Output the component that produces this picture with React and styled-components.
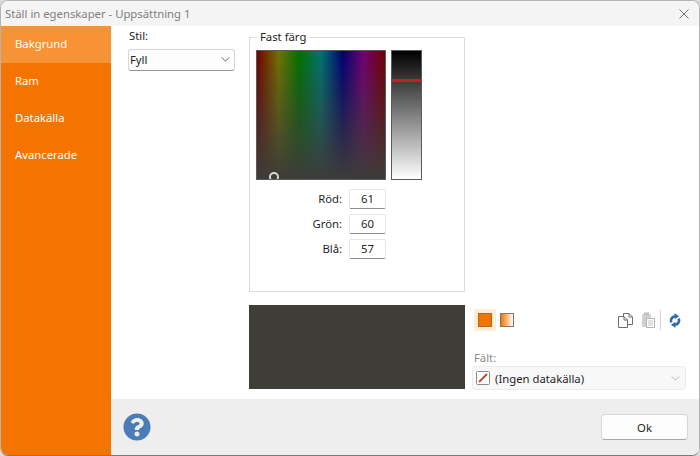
import React from 'react'
import styled, { createGlobalStyle } from 'styled-components'
import { FaQuestionCircle } from 'react-icons/fa'

const GlobalStyle = createGlobalStyle`
    html, body {
        margin: 0;
        padding: 0;
        background: #dcdcdc;
    }
    body {
        font-family: "Noto Sans", "Open Sans", sans-serif;
        font-size: 11.3px;
        color: #1f1f1f;
    }
`;

const tabs = ['Bakgrund', 'Ram', 'Datakälla', 'Avancerade'];
const channels = [['Röd:', 61], ['Grön:', 60], ['Blå:', 57]];

const Chevron = ({color}) => (
    <svg width="9" height="5" viewBox="0 0 10 6" fill="none" stroke={color} strokeWidth="1.1">
        <path d="M0.5 0.5 L5 5 L9.5 0.5"/>
    </svg>
);

const CopyIcon = () => (
    <svg width="15" height="15" viewBox="0 0 15 15" fill="#fff" stroke="#6e6e6e" strokeWidth="1">
        <path d="M5.5 3.5 V0.5 H11 L14.5 4 V11.5 H9.5"/>
        <path d="M0.5 3.5 H6 L9.5 7 V14.5 H0.5 Z"/>
        <path d="M6 3.5 V7 H9.5" fill="none"/>
        <path d="M11 0.5 V4 H14.5" fill="none"/>
    </svg>
);

const PasteIcon = () => (
    <svg width="13" height="16" viewBox="0 0 13 16">
        <rect x="0" y="2" width="9" height="13" rx="1" fill="#cfd2d0"/>
        <rect x="2" y="0.5" width="5" height="3" fill="#bcc0be"/>
        <path d="M4.5 6.5 H12.5 V15.5 H4.5 Z" fill="#fff" stroke="#b4b4b4"/>
        <path d="M6 9 H11 M6 11 H11 M6 13 H11" stroke="#c4c4c4"/>
    </svg>
);

const RefreshIcon = () => (
    <svg width="12" height="15" viewBox="0 0 12 15" fill="none">
        <path d="M2.2 9.5 C1.2 6.5 3 3.4 6.2 3.2" stroke="#2b6cb0" strokeWidth="2.6"/>
        <path d="M5.6 0 L10 3.2 L5.6 6.2 Z" fill="#2b6cb0"/>
        <path d="M9.8 5.5 C10.8 8.5 9 11.6 5.8 11.8" stroke="#2b6cb0" strokeWidth="2.6"/>
        <path d="M6.4 8.8 L2 11.8 L6.4 15 Z" fill="#2b6cb0"/>
    </svg>
);

const NoSourceIcon = () => (
    <svg width="14" height="14" viewBox="0 0 14 14" fill="#fff">
        <rect x="0.5" y="0.5" width="13" height="13" rx="1" stroke="#8c8c8c"/>
        <path d="M3 11 L11 3" stroke="#c8402c" strokeWidth="1.8"/>
    </svg>
);

export default function App() {
    return (
        <>
            <GlobalStyle/>
            <Window>
                <TitleBar>
                    <Title>Ställ in egenskaper - Uppsättning 1</Title>
                    <CloseIcon viewBox="0 0 10 10">
                        <path d="M0.5 0.5 L9.5 9.5 M9.5 0.5 L0.5 9.5"/>
                    </CloseIcon>
                </TitleBar>
                <Body>
                    <Sidebar>
                        {tabs.map((tab, i) => (
                            <Tab key={tab} $active={i === 0}>{tab}</Tab>
                        ))}
                    </Sidebar>
                    <Main>
                        <Content>
                            <TopRow>
                                <StyleColumn>
                                    <StyleLabel>Stil:</StyleLabel>
                                    <StyleSelect>
                                        <span>Fyll</span>
                                        <Chevron color="#555"/>
                                    </StyleSelect>
                                </StyleColumn>
                                <ColorGroup>
                                    <ColorLegend>Fast färg</ColorLegend>
                                    <PickerRow>
                                        <HuePicker>
                                            <PickerRing/>
                                        </HuePicker>
                                        <LightnessBar>
                                            <LightnessHandle/>
                                        </LightnessBar>
                                    </PickerRow>
                                    <ChannelGrid>
                                        {channels.map(([label, value]) => (
                                            <React.Fragment key={label}>
                                                <ChannelLabel>{label}</ChannelLabel>
                                                <ChannelInput readOnly value={value}/>
                                            </React.Fragment>
                                        ))}
                                    </ChannelGrid>
                                </ColorGroup>
                            </TopRow>
                            <BottomRow>
                                <Preview/>
                                <SourcePanel>
                                    <Toolbar>
                                        <SwatchButton $active>
                                            <Swatch/>
                                        </SwatchButton>
                                        <GradientSwatch/>
                                        <ToolSpacer/>
                                        <CopyIcon/>
                                        <PasteSlot>
                                            <PasteIcon/>
                                        </PasteSlot>
                                        <ToolDivider/>
                                        <RefreshIcon/>
                                    </Toolbar>
                                    <FieldLabel>Fält:</FieldLabel>
                                    <FieldSelect>
                                        <NoSourceIcon/>
                                        <FieldText>(Ingen datakälla)</FieldText>
                                        <Chevron color="#b5b5b5"/>
                                    </FieldSelect>
                                </SourcePanel>
                            </BottomRow>
                        </Content>
                        <Footer>
                            <HelpIcon/>
                            <OkButton>Ok</OkButton>
                        </Footer>
                    </Main>
                </Body>
            </Window>
        </>
    )
}

const Window = styled.div`
    width: 700px;
    height: 456px;
    box-sizing: border-box;
    display: flex;
    flex-direction: column;
    background: #fff;
    border: 1px solid #b4b4b4;
    border-bottom-color: #7a7a7a;
    border-radius: 8px;
    overflow: hidden;
`;

const TitleBar = styled.div`
    height: 25px;
    flex: none;
    display: flex;
    align-items: center;
    justify-content: space-between;
    padding: 0 10px 0 4px;
    background: #f4f4f4;
`;

const Title = styled.span`
    color: #808080;
`;

const CloseIcon = styled.svg`
    width: 10px;
    height: 10px;
    fill: none;
    stroke: #707070;
`;

const Body = styled.div`
    flex: 1;
    display: flex;
    min-height: 0;
`;

const Sidebar = styled.div`
    width: 110px;
    flex: none;
    background: #f57400;
`;

const Tab = styled.div`
    height: 37px;
    box-sizing: border-box;
    display: flex;
    align-items: center;
    padding: 0 0 2px 14px;
    color: #fff;
    background: ${props => props.$active ? '#f79235' : 'transparent'};
`;

const Main = styled.div`
    flex: 1;
    display: flex;
    flex-direction: column;
`;

const Content = styled.div`
    flex: 1;
    padding: 3px 13px 0 17px;
`;

const TopRow = styled.div`
    display: flex;
    gap: 14px;
`;

const StyleColumn = styled.div`
    width: 107px;
`;

const StyleLabel = styled.div`
    height: 16px;
    line-height: 14px;
    margin-bottom: 4px;
    padding-left: 1px;
`;

const StyleSelect = styled.div`
    height: 22px;
    box-sizing: border-box;
    display: flex;
    align-items: center;
    justify-content: space-between;
    padding: 0 4px 2px 1px;
    background: #fdfdfd;
    border: 1px solid #d6d6d6;
    border-bottom-color: #9a9a9a;
    border-radius: 3px;
`;

const ColorGroup = styled.fieldset`
    width: 216px;
    height: 263px;
    box-sizing: border-box;
    margin: 0;
    padding: 5px 0 0 6px;
    border: 1px solid #dcdcdc;
    min-inline-size: 0;
`;

const ColorLegend = styled.legend`
    margin-left: 1px;
    padding: 0 3px;
    height: 16px;
    line-height: 16px;
`;

const PickerRow = styled.div`
    display: flex;
    gap: 5px;
`;

const HuePicker = styled.div`
    position: relative;
    width: 130px;
    height: 130px;
    box-sizing: border-box;
    border: 1px solid #5a5a5a;
    overflow: hidden;
    background:
        linear-gradient(to bottom, rgba(61, 60, 57, 0), #3d3c39),
        linear-gradient(to right, #720000, #727200 17%, #007200 33%, #007272 50%, #000072 67%, #720072 83%, #720000);
`;

const PickerRing = styled.div`
    position: absolute;
    left: 12px;
    top: 121px;
    width: 10px;
    height: 10px;
    box-sizing: border-box;
    border: 2px solid #d8d8d8;
    border-radius: 50%;
`;

const LightnessBar = styled.div`
    position: relative;
    width: 31px;
    height: 130px;
    box-sizing: border-box;
    border: 1px solid #5a5a5a;
    background: linear-gradient(to bottom, #000, #fff);
`;

const LightnessHandle = styled.div`
    position: absolute;
    left: 0;
    right: 0;
    top: 28px;
    height: 3px;
    background: #c0202a;
`;

const ChannelGrid = styled.div`
    display: grid;
    grid-template-columns: 86px 37px;
    grid-auto-rows: 20px;
    column-gap: 7px;
    row-gap: 5px;
    margin-top: 9px;
    align-items: center;
`;

const ChannelLabel = styled.label`
    text-align: right;
    padding-bottom: 2px;
`;

const ChannelInput = styled.input`
    width: 37px;
    height: 20px;
    box-sizing: border-box;
    padding: 0 0 2px;
    font: inherit;
    color: inherit;
    text-align: center;
    background: #fff;
    border: 1px solid #e6e6e6;
    border-bottom-color: #8c8c8c;
    border-radius: 2px;
    outline: none;
`;

const BottomRow = styled.div`
    display: flex;
    gap: 7px;
    margin: 13px 0 0 121px;
`;

const Preview = styled.div`
    width: 216px;
    height: 84px;
    background: #3e3d38;
`;

const SourcePanel = styled.div`
    width: 214px;
    display: flex;
    flex-direction: column;
`;

const Toolbar = styled.div`
    height: 28px;
    display: flex;
    align-items: center;
    padding: 2px 5px 0 2px;
    box-sizing: border-box;
`;

const SwatchButton = styled.div`
    width: 22px;
    height: 22px;
    display: flex;
    align-items: center;
    justify-content: center;
    background: ${props => props.$active ? '#fdeed2' : 'transparent'};
`;

const Swatch = styled.div`
    width: 14px;
    height: 14px;
    box-sizing: border-box;
    background: #f57300;
    border: 1px solid #a0693a;
`;

const GradientSwatch = styled.div`
    width: 14px;
    height: 14px;
    margin-left: 4px;
    box-sizing: border-box;
    background: linear-gradient(to right, #f57300, #fff);
    border: 1px solid #85756a;
`;

const ToolSpacer = styled.div`
    flex: 1;
`;

const PasteSlot = styled.div`
    display: flex;
    margin-left: 9px;
`;

const ToolDivider = styled.div`
    width: 1px;
    height: 20px;
    margin: 0 8px 0 5px;
    background: #d4d4d4;
`;

const FieldLabel = styled.div`
    margin: 17px 0 1px 2px;
    height: 15px;
    line-height: 15px;
    color: #8a8a8a;
`;

const FieldSelect = styled.div`
    height: 24px;
    box-sizing: border-box;
    display: flex;
    align-items: center;
    padding: 0 5px 0 3px;
    background: #f8f8f8;
    border: 1px solid #ececec;
    border-radius: 3px;
`;

const FieldText = styled.span`
    flex: 1;
    margin-left: 5px;
`;

const Footer = styled.div`
    height: 56px;
    flex: none;
    display: flex;
    align-items: center;
    justify-content: space-between;
    box-sizing: border-box;
    padding: 0 11px 0 12px;
    background: #eeeeee;
`;

const HelpIcon = styled(FaQuestionCircle)`
    width: 28px;
    height: 28px;
    color: #4a7db8;
`;

const OkButton = styled.button`
    width: 87px;
    height: 26px;
    padding: 0;
    font: inherit;
    color: inherit;
    background: #fdfdfd;
    border: 1px solid #d6d6d6;
    border-bottom-color: #a8a8a8;
    border-radius: 4px;
`;
